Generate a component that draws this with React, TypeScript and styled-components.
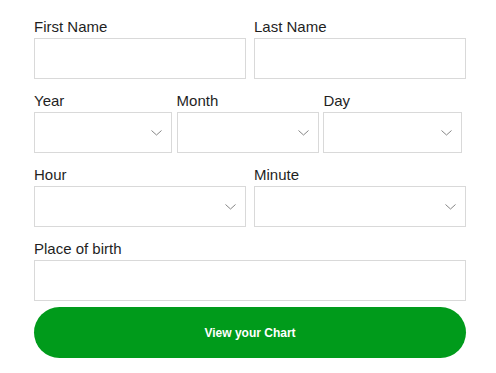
import { FC } from 'react';

// ** Libs
import styled, { createGlobalStyle } from 'styled-components';

const GlobalStyle = createGlobalStyle`
  body {
    margin: 0;
    background: #ffffff;
    font-family: 'Liberation Sans', Arial, sans-serif;
  }
`;

const Form = styled.form`
  display: flex;
  flex-direction: column;
  gap: 13px;
  width: 432px;
  margin-left: 34px;
  padding-top: 18px;
`;

const Row = styled.div<{ $cols: string }>`
  display: grid;
  grid-template-columns: ${({ $cols }) => $cols};
  column-gap: ${({ $cols }) => ($cols.split(' ').length === 3 ? '1%' : '8px')};
`;

const Field = styled.div`
  display: flex;
  flex-direction: column;
  min-width: 0;
`;

const Label = styled.label`
  font-size: 15px;
  line-height: 17px;
  color: #1f1f1f;
  margin-bottom: 3px;
`;

const Input = styled.input`
  box-sizing: border-box;
  width: 100%;
  height: 41px;
  border: 1px solid #d9d9d9;
  border-radius: 0;
  outline: none;
  padding: 0 10px;
  font-family: inherit;
  font-size: 14px;
  background: #ffffff;
`;

const SelectWrap = styled.div`
  position: relative;
`;

const Select = styled.select`
  box-sizing: border-box;
  width: 100%;
  height: 41px;
  border: 1px solid #d9d9d9;
  border-radius: 0;
  outline: none;
  padding: 0 10px;
  appearance: none;
  background: #ffffff;
  font-family: inherit;
  font-size: 14px;
`;

const Chevron = styled.svg`
  position: absolute;
  right: 10px;
  top: 18px;
  pointer-events: none;
`;

const SubmitButton = styled.button`
  height: 51px;
  margin-top: -7px;
  border: none;
  border-radius: 26px;
  background-color: #009b1b;
  color: #ffffff;
  font-family: inherit;
  font-weight: bold;
  font-size: 12px;
  cursor: pointer;
`;

const DropDown: FC<{ id: string }> = ({ id }) => (
  <SelectWrap>
    <Select id={id} defaultValue="">
      <option value="" />
    </Select>
    <Chevron width="11" height="6" viewBox="0 0 11 6">
      <polyline points="0.5,0.5 5.5,5 10.5,0.5" fill="none" stroke="#858585" strokeWidth="1" />
    </Chevron>
  </SelectWrap>
);

const App: FC = () => {
  return (
    <>
      <GlobalStyle />
      <Form onSubmit={(e) => e.preventDefault()}>
        <Row $cols="1fr 1fr">
          <Field>
            <Label htmlFor="first">First Name</Label>
            <Input id="first" type="text" />
          </Field>
          <Field>
            <Label htmlFor="last">Last Name</Label>
            <Input id="last" type="text" />
          </Field>
        </Row>

        <Row $cols="32% 33% 32%">
          <Field>
            <Label htmlFor="year">Year</Label>
            <DropDown id="year" />
          </Field>
          <Field>
            <Label htmlFor="month">Month</Label>
            <DropDown id="month" />
          </Field>
          <Field>
            <Label htmlFor="day">Day</Label>
            <DropDown id="day" />
          </Field>
        </Row>

        <Row $cols="1fr 1fr">
          <Field>
            <Label htmlFor="hour">Hour</Label>
            <DropDown id="hour" />
          </Field>
          <Field>
            <Label htmlFor="minute">Minute</Label>
            <DropDown id="minute" />
          </Field>
        </Row>

        <Field>
          <Label htmlFor="place">Place of birth</Label>
          <Input id="place" type="text" />
        </Field>

        <SubmitButton type="submit">View your Chart</SubmitButton>
      </Form>
    </>
  );
};

export default App;
